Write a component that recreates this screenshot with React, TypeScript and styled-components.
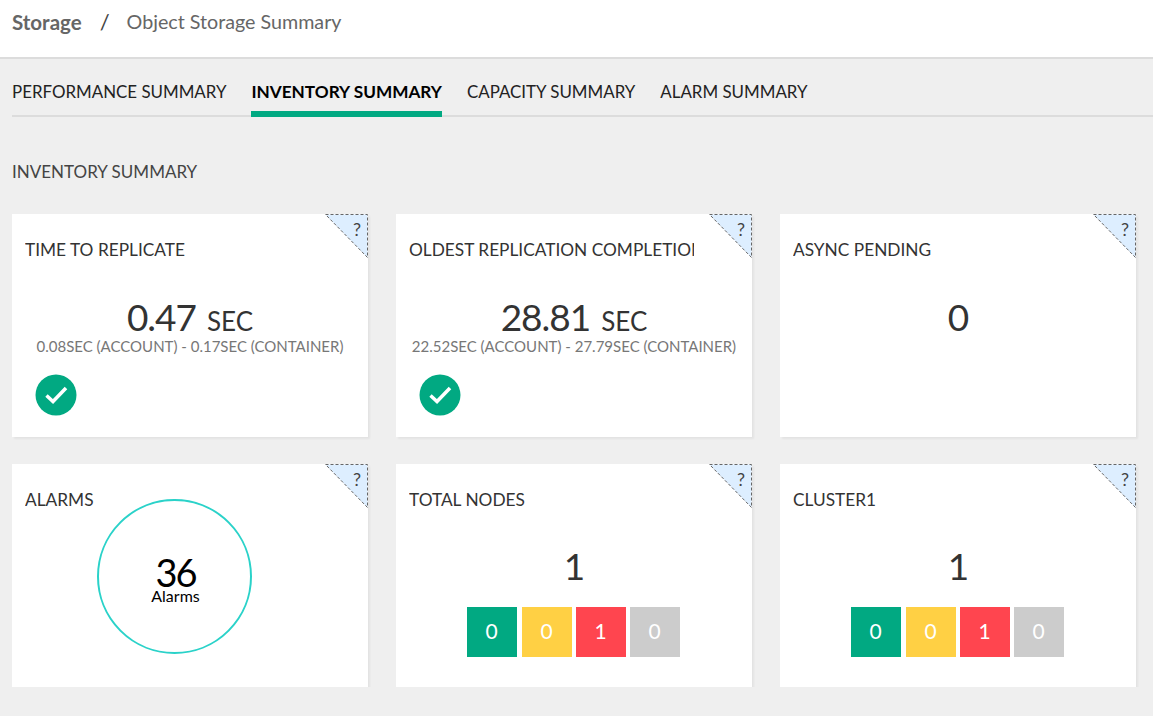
import React from 'react';
import styled, { createGlobalStyle } from 'styled-components';

const GlobalStyle = createGlobalStyle`
  html, body {
    margin: 0;
    padding: 0;
    background: #efefef;
    font-family: 'Lato', 'Noto Sans', Arial, sans-serif;
    color: #333;
  }
`;

const Header = styled.header`
  height: 47px;
  padding: 10px 12px 0;
  background: #fff;
  border-bottom: 2px solid #dcdcdc;
  display: flex;
  line-height: 24px;
  color: #666;
`;

const Crumb = styled.span<{ $bold?: boolean }>`
  font-size: ${({ $bold }) => ($bold ? '20.5px' : '19.7px')};
  font-weight: ${({ $bold }) => ($bold ? 700 : 400)};
`;

const Slash = styled.span`
  margin: 0 17px 0 18px;
  font-size: 22px;
  color: #444;
`;

const Tabs = styled.nav`
  display: flex;
  align-items: flex-start;
  gap: 25px;
  margin: 18px 0 0 12px;
  height: 38px;
  border-bottom: 2px solid #dcdcdc;
`;

const Tab = styled.div<{ $active?: boolean }>`
  height: 34px;
  line-height: 30px;
  font-size: ${({ $active }) => ($active ? '17.2px' : '16.9px')};
  white-space: nowrap;
  color: ${({ $active }) => ($active ? '#000' : '#222')};
  font-weight: ${({ $active }) => ($active ? 700 : 400)};
  border-bottom: 6px solid ${({ $active }) => ($active ? '#01a982' : 'transparent')};
`;

const SectionTitle = styled.h2`
  margin: 43px 0 30px 12px;
  font-size: 17px;
  line-height: 24px;
  font-weight: 400;
  color: #444;
`;

const Grid = styled.main`
  display: grid;
  grid-template-columns: repeat(3, 356px);
  grid-auto-rows: 223px;
  column-gap: 28px;
  row-gap: 27px;
  margin-left: 12px;
`;

const Card = styled.section`
  position: relative;
  box-sizing: border-box;
  padding: 26px 13px 0;
  background: #fff;
  box-shadow: 2px 2px 2px rgba(0, 0, 0, 0.05);
`;

const HelpCorner = styled.div`
  position: absolute;
  top: 0;
  right: 0;
  width: 43px;
  height: 44px;
  font-size: 18px;
  color: #444;
`;

const HelpMark = styled.span`
  position: absolute;
  top: 6px;
  right: 7px;
  line-height: 18px;
`;

const Title = styled.h3`
  margin: 0;
  max-width: 285px;
  overflow: hidden;
  white-space: nowrap;
  font-size: 17.3px;
  line-height: 20px;
  font-weight: 400;
  color: #333;
`;

const Value = styled.div<{ $compact?: boolean }>`
  margin-top: ${({ $compact }) => ($compact ? '32px' : '33px')};
  text-align: center;
  font-size: 37px;
  letter-spacing: -1px;
  line-height: 48px;
  color: #333;
`;

const Unit = styled.span`
  margin-left: 11px;
  font-size: 26px;
  letter-spacing: 0;
  line-height: 1;
`;

const Detail = styled.div`
  text-align: center;
  font-size: 15px;
  line-height: 20px;
  margin-top: -5px;
  color: #777;
`;

const CheckBadge = styled.svg`
  display: block;
  width: 42px;
  height: 42px;
  margin: 18px 0 0 10px;
`;

const AlarmBody = styled.div`
  display: flex;
  align-items: flex-start;
  gap: 3px;
`;

const AlarmRing = styled.div`
  box-sizing: border-box;
  flex: none;
  width: 155px;
  height: 155px;
  margin-top: 9px;
  border: 2.5px solid #2ad2c9;
  border-radius: 50%;
  display: flex;
  flex-direction: column;
  align-items: center;
  justify-content: center;
  color: #000;
`;

const AlarmCount = styled.div`
  font-size: 38px;
  letter-spacing: -2px;
  line-height: 30px;
  margin-left: 3px;
  margin-top: 9px;
`;

const AlarmLabel = styled.div`
  font-size: 16px;
  line-height: 18px;
  margin-left: 3px;
`;

const Statuses = styled.div`
  display: flex;
  justify-content: center;
  gap: 4px;
  margin-top: 17px;
  padding-right: 2px;
`;

const Status = styled.div<{ $color: string; $first?: boolean }>`
  width: 50px;
  height: 50px;
  margin-right: ${({ $first }) => ($first ? '1px' : 0)};
  background: ${({ $color }) => $color};
  color: #fff;
  font-size: 21px;
  line-height: 47px;
  text-align: center;
`;

const Help = () => (
  <HelpCorner>
    <svg width="43" height="44" viewBox="0 0 43 44">
      <polygon
        points="0.5,0.5 42.5,0.5 42.5,43.5"
        fill="#ddeeff"
        stroke="#666"
        strokeWidth="1"
        strokeDasharray="3 2"
      />
    </svg>
    <HelpMark>?</HelpMark>
  </HelpCorner>
);

const Check = () => (
  <CheckBadge viewBox="0 0 42 42">
    <circle cx="21" cy="21" r="20.5" fill="#01a982" />
    <path d="M11.5 21.5l6.5 6L31 14" fill="none" stroke="#fff" strokeWidth="3.5" />
  </CheckBadge>
);

const statuses = [
  { color: '#01a982', value: 0 },
  { color: '#ffd044', value: 0 },
  { color: '#ff454f', value: 1 },
  { color: '#cccccc', value: 0 },
];

const StatusRow = () => (
  <Statuses>
    {statuses.map((s, i) => (
      <Status key={i} $color={s.color} $first={i === 0}>
        {s.value}
      </Status>
    ))}
  </Statuses>
);

const App: React.FC = () => (
  <>
    <GlobalStyle />
    <Header>
      <Crumb $bold>Storage</Crumb>
      <Slash>/</Slash>
      <Crumb>Object Storage Summary</Crumb>
    </Header>
    <Tabs>
      <Tab>PERFORMANCE SUMMARY</Tab>
      <Tab $active>INVENTORY SUMMARY</Tab>
      <Tab>CAPACITY SUMMARY</Tab>
      <Tab>ALARM SUMMARY</Tab>
    </Tabs>
    <SectionTitle>INVENTORY SUMMARY</SectionTitle>
    <Grid>
      <Card>
        <Help />
        <Title>TIME TO REPLICATE</Title>
        <Value>
          0.47<Unit>SEC</Unit>
        </Value>
        <Detail>0.08SEC (ACCOUNT) - 0.17SEC (CONTAINER)</Detail>
        <Check />
      </Card>
      <Card>
        <Help />
        <Title>OLDEST REPLICATION COMPLETION TIME</Title>
        <Value>
          28.81<Unit>SEC</Unit>
        </Value>
        <Detail>22.52SEC (ACCOUNT) - 27.79SEC (CONTAINER)</Detail>
        <Check />
      </Card>
      <Card>
        <Help />
        <Title>ASYNC PENDING</Title>
        <Value>0</Value>
      </Card>
      <Card>
        <Help />
        <AlarmBody>
          <Title>ALARMS</Title>
          <AlarmRing>
            <AlarmCount>36</AlarmCount>
            <AlarmLabel>Alarms</AlarmLabel>
          </AlarmRing>
        </AlarmBody>
      </Card>
      <Card>
        <Help />
        <Title>TOTAL NODES</Title>
        <Value $compact>1</Value>
        <StatusRow />
      </Card>
      <Card>
        <Help />
        <Title>CLUSTER1</Title>
        <Value $compact>1</Value>
        <StatusRow />
      </Card>
    </Grid>
  </>
);

export default App;
